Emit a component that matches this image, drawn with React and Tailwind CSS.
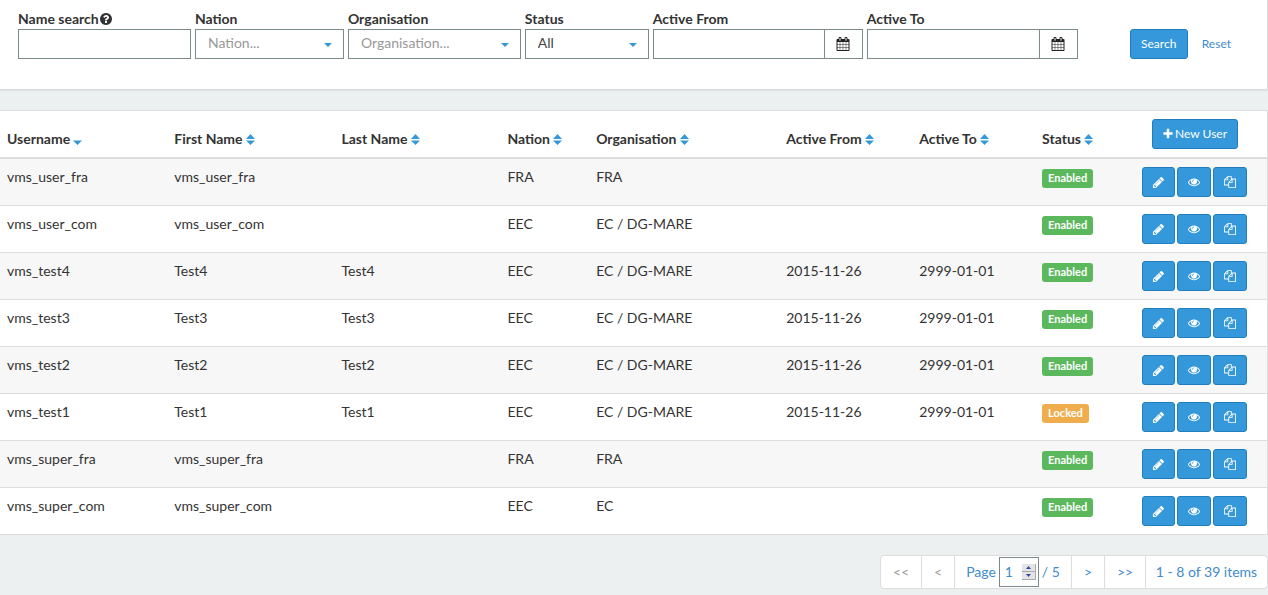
import { useState } from "react";

const ICONS = {
  pencil:
    "M491 1536l91-91-235-235-91 91v107h128v128h107zm523-928q0-22-22-22-10 0-17 7l-542 542q-7 7-7 17 0 22 22 22 10 0 17-7l542-542q7-7 7-17zm-54-192l416 416-832 832h-416v-416zm683 96q0 53-37 90l-166 166-416-416 166-165q36-38 90-38 53 0 91 38l235 234q37 39 37 91z",
  eye: "M1664 960q-152-236-381-353 61 104 61 225 0 185-131.5 316.5t-316.5 131.5-316.5-131.5-131.5-316.5q0-121 61-225-229 117-381 353 133 205 333.5 326.5t434.5 121.5 434.5-121.5 333.5-326.5zm-720-384q0-20-14-34t-34-14q-125 0-214.5 89.5t-89.5 214.5q0 20 14 34t34 14 34-14 14-34q0-86 61-147t147-61q20 0 34-14t14-34zm848 384q0 34-20 69-140 230-376.5 368.5t-499.5 138.5-499.5-139-376.5-368q-20-35-20-69t20-69q140-229 376.5-368t499.5-139 499.5 139 376.5 368q20 35 20 69z",
  files:
    "M1696 384q40 0 68 28t28 68v1216q0 40-28 68t-68 28h-960q-40 0-68-28t-28-68v-288h-544q-40 0-68-28t-28-68v-672q0-40 20-88t48-76l408-408q28-28 76-48t88-20h416q40 0 68 28t28 68v328q68-40 128-40h416zm-544 213l-299 299h299v-299zm-640-384l-299 299h299v-299zm196 647l316-316v-416h-384v416q0 40-28 68t-68 28h-416v640h512v-256q0-40 20-88t48-76zm956 804v-1152h-384v416q0 40-28 68t-68 28h-416v640h896z",
  calendar:
    "M192 1664h288v-288h-288v288zm352 0h320v-288h-320v288zm-352-352h288v-320h-288v320zm352 0h320v-320h-320v320zm-352-384h288v-288h-288v288zm736 736h320v-288h-320v288zm-384-736h320v-288h-320v288zm768 736h288v-288h-288v288zm-384-352h320v-320h-320v320zm-352-864v-288q0-13-9.5-22.5t-22.5-9.5h-64q-13 0-22.5 9.5t-9.5 22.5v288q0 13 9.5 22.5t22.5 9.5h64q13 0 22.5-9.5t9.5-22.5zm736 864h288v-320h-288v320zm-384-384h320v-288h-320v288zm384 0h288v-288h-288v288zm32-480v-288q0-13-9.5-22.5t-22.5-9.5h-64q-13 0-22.5 9.5t-9.5 22.5v288q0 13 9.5 22.5t22.5 9.5h64q13 0 22.5-9.5t9.5-22.5zm384-64v1280q0 52-38 90t-90 38h-1408q-52 0-90-38t-38-90v-1280q0-52 38-90t90-38h128v-96q0-66 47-113t113-47h64q66 0 113 47t47 113v96h384v-96q0-66 47-113t113-47h64q66 0 113 47t47 113v96h128q52 0 90 38t38 90z",
  plus: "M1600 736v192q0 40-28 68t-68 28h-416v416q0 40-28 68t-68 28h-192q-40 0-68-28t-28-68v-416h-416q-40 0-68-28t-28-68v-192q0-40 28-68t68-28h416v-416q0-40 28-68t68-28h192q40 0 68 28t28 68v416h416q40 0 68 28t28 68z",
  question:
    "M1024 1376v-192q0-14-9-23t-23-9h-192q-14 0-23 9t-9 23v192q0 14 9 23t23 9h192q14 0 23-9t9-23zm256-672q0-88-55.5-163t-138.5-116-170-41q-243 0-371 213-15 24 8 42l132 100q7 6 19 6 16 0 25-12 53-68 86-92 34-24 86-24 48 0 85.5 26t37.5 59q0 38-20 61t-68 45q-63 28-115.5 86.5t-52.5 125.5v36q0 14 9 23t23 9h192q14 0 23-9t9-23q0-19 21.5-49.5t54.5-49.5q32-18 49-28.5t46-35 44.5-48 28-60.5 12.5-81zm384 192q0 209-103 385.5t-279.5 279.5-385.5 103-385.5-103-279.5-279.5-103-385.5 103-385.5 279.5-279.5 385.5-103 385.5 103 279.5 279.5 103 385.5z",
};

function Icon({ name, className }) {
  return (
    <svg viewBox="0 0 1792 1792" fill="currentColor" aria-hidden="true" className={className}>
      <path d={ICONS[name]} />
    </svg>
  );
}

const LABEL = "flex h-5 items-center font-bold whitespace-nowrap";
const FIELD = "h-[30px] w-full min-w-0 border border-[#7b8a8b] bg-white px-3 outline-none";
const BUTTON =
  "inline-flex h-[30px] shrink-0 items-center justify-center rounded-[3px] border border-[#217dbb] bg-[#3498db] text-xs text-white";

function SelectField({ id, label, options, muted }) {
  return (
    <div className="min-w-0">
      <label htmlFor={id} className={LABEL}>
        {label}
      </label>
      <div className="relative">
        <select
          id={id}
          className={`${FIELD} appearance-none pb-[2px] ${muted ? "text-[#999]" : "text-[#444]"}`}
        >
          {options.map((o) => (
            <option key={o}>{o}</option>
          ))}
        </select>
        <svg
          viewBox="0 0 8 4"
          aria-hidden="true"
          className="pointer-events-none absolute top-[14px] right-3 h-1 w-2 fill-[#3498db]"
        >
          <path d="M0 0h8l-4 4z" />
        </svg>
      </div>
    </div>
  );
}

function DateField({ id, label }) {
  return (
    <div className="min-w-0">
      <label htmlFor={id} className={LABEL}>
        {label}
      </label>
      <div className="flex">
        <input id={id} type="text" className={FIELD} />
        <button
          type="button"
          aria-label={`Pick ${label}`}
          className="flex h-[30px] w-[38px] shrink-0 items-center justify-center border border-l-0 border-[#7b8a8b] bg-white text-[#222]"
        >
          <Icon name="calendar" className="size-[14px]" />
        </button>
      </div>
    </div>
  );
}

function SortMark({ active }) {
  return (
    <svg viewBox="0 0 9 11" aria-hidden="true" className="h-[11px] w-[9px] fill-[#3498db]">
      {!active && <path d="M0 5L4.500 0L9 5z" />}
      <path d="M0 6.500h9L4.500 11z" />
    </svg>
  );
}

const COLUMNS = [
  { title: "Username", width: "w-[13.2%]" },
  { title: "First Name", width: "w-[13.2%]" },
  { title: "Last Name", width: "w-[13.1%]" },
  { title: "Nation", width: "w-[7%]" },
  { title: "Organisation", width: "w-[15%]" },
  { title: "Active From", width: "w-[10.5%]" },
  { title: "Active To", width: "w-[9.7%]" },
  { title: "Status", width: "w-[7.9%]" },
];

const USERS = [
  ["vms_user_fra", "vms_user_fra", "", "FRA", "FRA", "", "", "Enabled"],
  ["vms_user_com", "vms_user_com", "", "EEC", "EC / DG-MARE", "", "", "Enabled"],
  ["vms_test4", "Test4", "Test4", "EEC", "EC / DG-MARE", "2015-11-26", "2999-01-01", "Enabled"],
  ["vms_test3", "Test3", "Test3", "EEC", "EC / DG-MARE", "2015-11-26", "2999-01-01", "Enabled"],
  ["vms_test2", "Test2", "Test2", "EEC", "EC / DG-MARE", "2015-11-26", "2999-01-01", "Enabled"],
  ["vms_test1", "Test1", "Test1", "EEC", "EC / DG-MARE", "2015-11-26", "2999-01-01", "Locked"],
  ["vms_super_fra", "vms_super_fra", "", "FRA", "FRA", "", "", "Enabled"],
  ["vms_super_com", "vms_super_com", "", "EEC", "EC", "", "", "Enabled"],
];

function StatusBadge({ status }) {
  return (
    <span
      className={`mt-[2px] inline-flex h-[19px] items-center rounded-[3px] px-[6px] pb-[2px] align-top text-[11px] font-bold text-white ${
        status === "Locked" ? "bg-[#f0ad4e]" : "bg-[#5cb85c]"
      }`}
    >
      {status}
    </span>
  );
}

function Filters() {
  return (
    <form
      onSubmit={(e) => e.preventDefault()}
      className="flex items-end border-r border-b border-[#ddd] bg-white pt-[9px] pr-9 pb-[30px] pl-[18px] shadow-[0_1px_1px_rgba(0,0,0,0.05)]"
    >
      <div className="grid flex-1 grid-cols-[173fr_149fr_173fr_124fr_210fr_211fr] gap-x-1">
        <div className="min-w-0">
          <label htmlFor="name" className={LABEL}>
            Name search
            <Icon name="question" className="size-[14px]" />
          </label>
          <input id="name" type="text" className={FIELD} />
        </div>
        <SelectField id="nation" label="Nation" muted options={["Nation...", "FRA", "EEC"]} />
        <SelectField
          id="organisation"
          label="Organisation"
          muted
          options={["Organisation...", "FRA", "EC", "EC / DG-MARE"]}
        />
        <SelectField id="status" label="Status" options={["All", "Enabled", "Locked"]} />
        <DateField id="from" label="Active From" />
        <DateField id="to" label="Active To" />
      </div>
      <button type="submit" className={`${BUTTON} ml-[52px] w-[58px]`}>
        Search
      </button>
      <button type="reset" className="ml-[14px] h-[30px] text-xs text-[#428bca]">
        Reset
      </button>
    </form>
  );
}

function UserTable() {
  return (
    <div className="mt-5 border-t border-r border-[#ddd] bg-white">
      <table className="w-full table-fixed border-separate border-spacing-0 text-left">
        <thead>
          <tr>
            {COLUMNS.map((c, i) => (
              <th
                key={c.title}
                className={`${c.width} h-12 border-b-2 border-[#ddd] pt-[10px] pl-[7px] font-bold`}
              >
                <button type="button" className="flex items-center gap-[3px] whitespace-nowrap">
                  {c.title}
                  <SortMark active={i === 0} />
                </button>
              </th>
            ))}
            <th className="border-b-2 border-[#ddd] pr-5 pl-[7px] text-center font-normal">
              <button type="button" className={`${BUTTON} w-[86px] gap-px align-middle`}>
                <Icon name="plus" className="size-3" />
                New User
              </button>
            </th>
          </tr>
        </thead>
        <tbody>
          {USERS.map((u) => (
            <tr key={u[0]} className="odd:bg-[#f7f7f7]">
              {u.map((value, i) => (
                <td key={i} className="border-b border-[#ddd] pt-2 pl-[7px] align-top whitespace-nowrap">
                  {i === 7 ? <StatusBadge status={value} /> : value}
                </td>
              ))}
              <td className="border-b border-[#ddd] py-2 pl-[7px]">
                <div className="flex gap-[2px]">
                  <button type="button" aria-label={`Edit ${u[0]}`} className={`${BUTTON} w-[33px]`}>
                    <Icon name="pencil" className="size-[13px]" />
                  </button>
                  <button type="button" aria-label={`View ${u[0]}`} className={`${BUTTON} w-[34px]`}>
                    <Icon name="eye" className="size-3" />
                  </button>
                  <button type="button" aria-label={`Copy ${u[0]}`} className={`${BUTTON} w-[34px]`}>
                    <Icon name="files" className="size-3" />
                  </button>
                </div>
              </td>
            </tr>
          ))}
        </tbody>
      </table>
    </div>
  );
}

function Pager() {
  const [page, setPage] = useState(1);
  const go = (n) => setPage(Math.min(5, Math.max(1, n)));
  const step =
    "flex h-2 w-[14px] items-center justify-center border-r border-b border-[#aaa] bg-[#e4e4e8]";
  return (
    <nav aria-label="Pages" className="mt-5 flex justify-end">
      <div className="flex h-[34px] divide-x divide-[#ddd] rounded border border-[#ddd] bg-white text-[#428bca]">
        <button type="button" onClick={() => go(1)} className="w-[41px] text-[#999]">
          &lt;&lt;
        </button>
        <button type="button" onClick={() => go(page - 1)} className="w-[33px] text-[#999]">
          &lt;
        </button>
        <div className="flex w-[117px] items-center justify-center">
          <label htmlFor="page">Page</label>
          <div className="relative mx-[3px]">
            <input
              id="page"
              type="number"
              min="1"
              max="5"
              value={page}
              onChange={(e) => go(Number(e.target.value))}
              className="block h-[30px] w-10 [appearance:textfield] border border-[#7b8a8b] bg-white pb-[2px] pl-[5px] outline-none [&::-webkit-inner-spin-button]:appearance-none"
            />
            <div className="absolute top-[7px] right-[3px] flex flex-col">
              <button type="button" aria-label="Next page number" onClick={() => go(page + 1)} className={step}>
                <svg viewBox="0 0 5 3" aria-hidden="true" className="h-[3px] w-[5px] fill-[#34479a]">
                  <path d="M0 3h5L2.500 0z" />
                </svg>
              </button>
              <button type="button" aria-label="Previous page number" onClick={() => go(page - 1)} className={step}>
                <svg viewBox="0 0 5 3" aria-hidden="true" className="h-[3px] w-[5px] fill-[#34479a]">
                  <path d="M0 0h5L2.500 3z" />
                </svg>
              </button>
            </div>
          </div>
          <span>/ 5</span>
        </div>
        <button type="button" onClick={() => go(page + 1)} className="w-[33px]">
          &gt;
        </button>
        <button type="button" onClick={() => go(5)} className="w-[41px]">
          &gt;&gt;
        </button>
        <span className="flex w-[121px] items-center justify-center whitespace-nowrap">1 - 8 of 39 items</span>
      </div>
    </nav>
  );
}

export default function App() {
  return (
    <main className="min-h-screen bg-[#ecf0f1] font-['Lato','Liberation_Sans',sans-serif] text-sm leading-5 text-[#333]">
      <Filters />
      <UserTable />
      <Pager />
    </main>
  );
}
